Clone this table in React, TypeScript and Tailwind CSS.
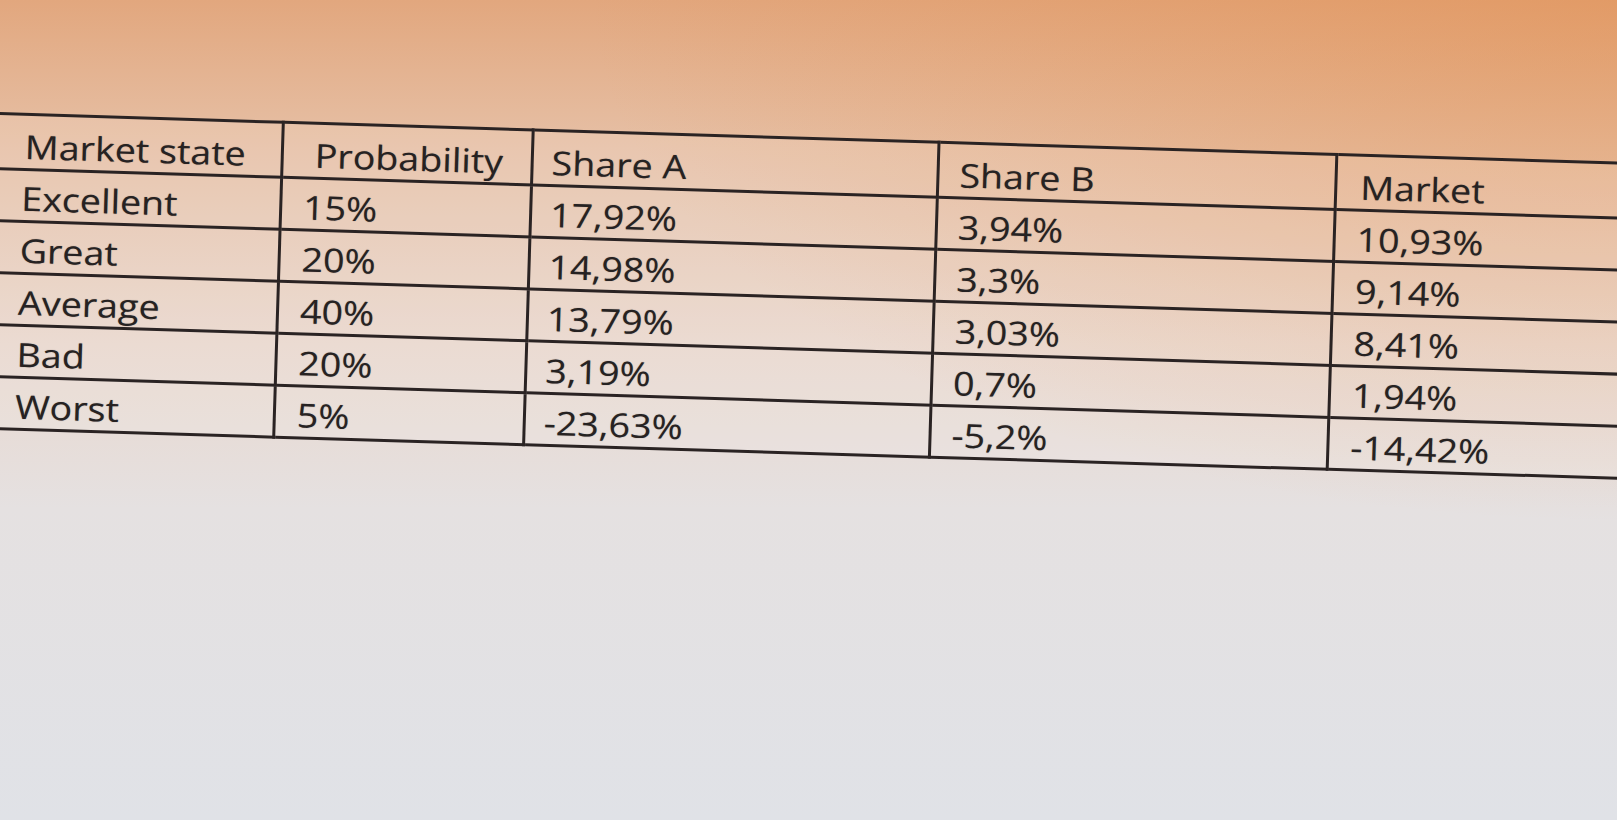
import React from 'react';

type Row = {
  state: string;
  probability: string;
  shareA: string;
  shareB: string;
  market: string;
};

const rows: Row[] = [
  { state: 'Excellent', probability: '15%', shareA: '17,92%', shareB: '3,94%', market: '10,93%' },
  { state: 'Great', probability: '20%', shareA: '14,98%', shareB: '3,3%', market: '9,14%' },
  { state: 'Average', probability: '40%', shareA: '13,79%', shareB: '3,03%', market: '8,41%' },
  { state: 'Bad', probability: '20%', shareA: '3,19%', shareB: '0,7%', market: '1,94%' },
  { state: 'Worst', probability: '5%', shareA: '-23,63%', shareB: '-5,2%', market: '-14,42%' },
];

const cell = 'border-[3px] border-[#2a2323] h-[52px] align-bottom pb-[1px] leading-[1.2] text-left font-medium';

// screen text is stretched wide in the photo
const Txt = ({ children }: { children: React.ReactNode }) => (
  <span className="inline-block origin-left scale-x-[1.14] whitespace-nowrap">{children}</span>
);

const App = () => {
  return (
    <div className="w-[1617px] h-[820px] overflow-hidden bg-[radial-gradient(ellipse_at_100%_0%,rgba(226,138,70,0.42),transparent_45%),linear-gradient(180deg,#e2a77e_0%,#e6c0a6_18%,#e9d7cd_42%,#e5e1e1_62%,#e0e2e7_100%)] font-['Open_Sans','Liberation_Sans',sans-serif] text-[33px] text-[#262222] [text-shadow:0_0_1px_rgba(30,20,20,0.4)]">
      <div className="pt-[112px] -ml-[4px]">
        <table className="w-[1760px] border-collapse table-fixed origin-top-left rotate-[1.75deg] bg-white/10">
          <colgroup>
            <col className="w-[286px]" />
            <col className="w-[250px]" />
            <col className="w-[406px]" />
            <col className="w-[398px]" />
            <col className="w-[420px]" />
          </colgroup>
          <thead>
            <tr>
              <th className={`${cell} h-[55px] pl-[27px]`}><Txt>Market state</Txt></th>
              <th className={`${cell} h-[55px] pl-[31px]`}><Txt>Probability</Txt></th>
              <th className={`${cell} h-[55px] pl-[18px]`}><Txt>Share A</Txt></th>
              <th className={`${cell} h-[55px] pl-[20px]`}><Txt>Share B</Txt></th>
              <th className={`${cell} h-[55px] pl-[23px]`}><Txt>Market</Txt></th>
            </tr>
          </thead>
          <tbody>
            {rows.map((r) => (
              <tr key={r.state}>
                <td className={`${cell} pl-[25px]`}><Txt>{r.state}</Txt></td>
                <td className={`${cell} pl-[21px]`}><Txt>{r.probability}</Txt></td>
                <td className={`${cell} pl-[18px]`}><Txt>{r.shareA}</Txt></td>
                <td className={`${cell} pl-[20px]`}><Txt>{r.shareB}</Txt></td>
                <td className={`${cell} pl-[21px]`}><Txt>{r.market}</Txt></td>
              </tr>
            ))}
          </tbody>
        </table>
      </div>
    </div>
  );
};

export default App;
